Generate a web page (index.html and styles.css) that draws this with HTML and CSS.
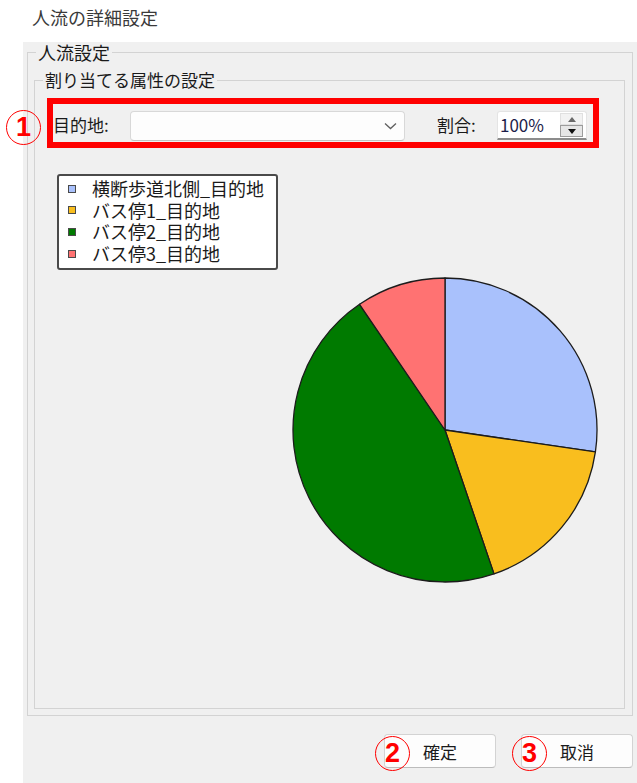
FILE: index.html
```html
<!DOCTYPE html>
<html lang="ja">
<head>
<meta charset="utf-8">
<title>人流の詳細設定</title>
<link rel="stylesheet" href="styles.css">
</head>
<body>
<div class="title">人流の詳細設定</div>
<div class="panel">
  <fieldset class="group outer">
    <legend class="group-title big">人流設定</legend>
    <fieldset class="group inner">
      <legend class="group-title">割り当てる属性の設定</legend>
      <div class="target-row">
        <span class="mark mark-row">1</span>
        <label class="field-label label-dest">目的地:</label>
        <div class="combo">
          <svg class="chevron" width="13" height="8" viewBox="0 0 13 8"><polyline points="1,1.5 6.5,6.5 12,1.5" fill="none" stroke="#5f5f5f" stroke-width="1.3"/></svg>
        </div>
        <label class="field-label label-ratio">割合:</label>
        <div class="spin">
          <span class="spin-value">100%</span>
          <div class="spin-buttons">
            <span class="spin-btn spin-up"><span class="tri-up"></span></span>
            <span class="spin-btn spin-down"><span class="tri-down"></span></span>
          </div>
        </div>
      </div>
      <div class="chart">
        <ul class="legend">
          <li class="legend-item"><span class="swatch sw-blue"></span>横断歩道北側_目的地</li>
          <li class="legend-item"><span class="swatch sw-yellow"></span>バス停1_目的地</li>
          <li class="legend-item"><span class="swatch sw-green"></span>バス停2_目的地</li>
          <li class="legend-item"><span class="swatch sw-red"></span>バス停3_目的地</li>
        </ul>
        <svg class="pie" width="310" height="310" viewBox="0 0 310 310">
          <g stroke="#1c1c1c" stroke-width="1.3" stroke-linejoin="round">
            <path fill="#a9c1fc" d="M155,155 L155,3 A152,152 0 0 1 305.41,176.94 Z"/>
            <path fill="#f9be1e" d="M155,155 L305.41,176.94 A152,152 0 0 1 203.98,298.89 Z"/>
            <path fill="#007a00" d="M155,155 L203.98,298.89 A152,152 0 0 1 69.56,29.28 Z"/>
            <path fill="#ff7272" d="M155,155 L69.56,29.28 A152,152 0 0 1 155,3 Z"/>
          </g>
        </svg>
      </div>
    </fieldset>
  </fieldset>
  <div class="buttons">
    <button class="btn" type="button">確定<span class="mark mark-btn">2</span></button>
    <button class="btn" type="button">取消<span class="mark mark-btn">3</span></button>
  </div>
</div>
</body>
</html>
```
FILE: styles.css
```css
html, body {
  margin: 0;
  padding: 0;
}
body {
  width: 637px;
  height: 783px;
  overflow: hidden;
  background: #ffffff;
  font-family: "Noto Sans CJK JP", "Noto Sans", sans-serif;
  font-size: 17px;
  color: #1a1a1a;
}
.title {
  height: 42px;
  box-sizing: border-box;
  padding-left: 32px;
  line-height: 34px;
  font-size: 18px;
  color: #3a3a3a;
}
.panel {
  margin-left: 23px;
  height: 741px;
  box-sizing: border-box;
  background: #f0f0f0;
  padding: 0 4px 15px 4px;
  display: flex;
  flex-direction: column;
}
.group {
  margin: 0;
  padding: 0;
  min-width: 0;
  border: 1px solid #d3d3d3;
  display: flex;
  flex-direction: column;
}
.group-title {
  margin-left: 8px;
  padding: 0 2px;
  line-height: 20px;
  color: #1a1a1a;
}
.group-title.big {
  font-size: 18px;
}
.outer {
  flex: 1;
}
.inner {
  flex: 1;
  margin: 8px 7px 6px 6px;
}
.target-row {
  position: relative;
  margin: 8px 0 0 12px;
  width: 552px;
  height: 50px;
  box-sizing: border-box;
  border: 6px solid #ff0000;
  padding-top: 7px;
  display: flex;
  align-items: flex-start;
}
.field-label {
  height: 30px;
  line-height: 27px;
  white-space: nowrap;
}
.label-dest {
  width: 77px;
}
.label-ratio {
  margin-left: 32px;
  width: 60px;
}
.combo {
  width: 275px;
  height: 30px;
  box-sizing: border-box;
  background: #fdfdfd;
  border: 1px solid #d8d8d8;
  border-bottom-color: #c2c2c2;
  border-radius: 4px;
  display: flex;
  align-items: center;
  justify-content: flex-end;
  padding-right: 7px;
}
.chevron {
  display: block;
}
.spin {
  width: 90px;
  height: 29px;
  box-sizing: border-box;
  background: #ffffff;
  border: 1px solid #e4e4e4;
  border-bottom: 2px solid #8c8c8c;
  border-radius: 3px 3px 0 0;
  display: flex;
  align-items: center;
  justify-content: space-between;
  padding: 0 3px 0 2px;
}
.spin-value {
  color: #1d1d4a;
  line-height: 26px;
}
.spin-buttons {
  display: flex;
  flex-direction: column;
  width: 23px;
}
.spin-btn {
  height: 12px;
  box-sizing: border-box;
  display: flex;
  align-items: center;
  justify-content: center;
}
.spin-up {
  background: #f2f2f2;
  border: 1px solid #e0e0e0;
}
.spin-down {
  background: #e6e6e6;
  border: 1px solid #9c9c9c;
}
.tri-up {
  width: 0;
  height: 0;
  border-left: 4px solid transparent;
  border-right: 4px solid transparent;
  border-bottom: 5px solid #6a6a6a;
}
.tri-down {
  width: 0;
  height: 0;
  border-left: 4px solid transparent;
  border-right: 4px solid transparent;
  border-top: 5px solid #111111;
}
.chart {
  margin: 26px 0 0 22px;
  display: flex;
  flex-direction: column;
  align-items: flex-start;
}
.legend {
  list-style: none;
  margin: 0;
  width: 221px;
  box-sizing: border-box;
  padding: 2px 0 4px 9px;
  background: #ffffff;
  border: 2px solid #4a4a4a;
  border-radius: 3px;
  font-size: 18px;
}
.legend-item {
  display: flex;
  align-items: center;
  height: 21.6px;
  line-height: 21.6px;
  white-space: nowrap;
}
.swatch {
  width: 8px;
  height: 8px;
  box-sizing: border-box;
  border: 1px solid #4a4a4a;
  margin-right: 16px;
  flex: none;
}
.sw-blue { background: #a9c1fc; }
.sw-yellow { background: #f9be1e; }
.sw-green { background: #007a00; }
.sw-red { background: #ff7272; }
.pie {
  display: block;
  margin: 5px 0 0 233px;
}
.buttons {
  margin-top: 18px;
  display: flex;
  justify-content: flex-end;
  gap: 25px;
}
.btn {
  position: relative;
  width: 112px;
  height: 34px;
  box-sizing: border-box;
  background: #fdfdfd;
  border: 1px solid #d3d3d3;
  border-bottom-color: #bcbcbc;
  border-radius: 4px;
  font-family: "Noto Sans CJK JP", "Noto Sans", sans-serif;
  font-size: 17px;
  color: #1a1a1a;
  padding: 0;
}
.mark {
  position: absolute;
  width: 35px;
  height: 35px;
  box-sizing: border-box;
  border: 1.5px solid #ff0000;
  border-radius: 50%;
  color: #ff0000;
  font-family: "Liberation Sans", "Noto Sans", sans-serif;
  font-weight: bold;
  font-size: 27px;
  line-height: 32px;
  text-align: center;
}
.mark-row {
  left: -47px;
  top: 6px;
}
.mark-btn {
  left: -10px;
  top: 1px;
}
```
